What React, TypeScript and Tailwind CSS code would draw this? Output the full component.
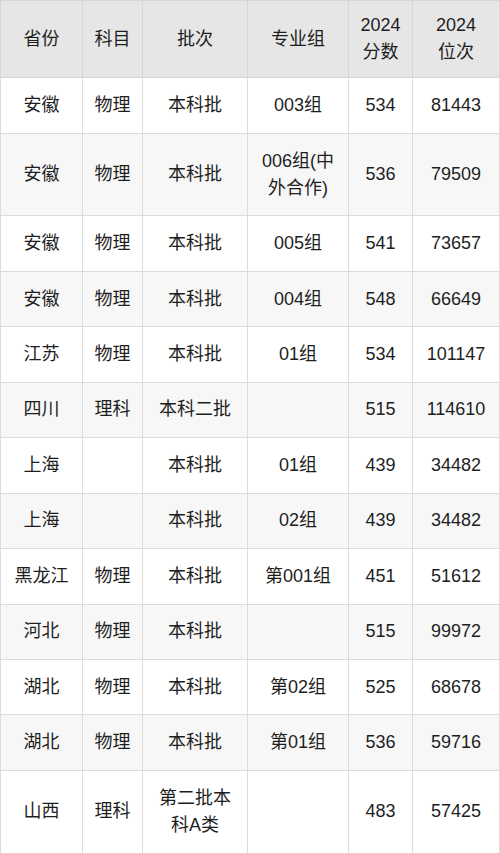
const rows: { cells: string[][]; h: string }[] = [
  { cells: [["安徽"], ["物理"], ["本科批"], ["003组"], ["534"], ["81443"]], h: "h-[56px]" },
  { cells: [["安徽"], ["物理"], ["本科批"], ["006组(中", "外合作)"], ["536"], ["79509"]], h: "h-[82px]" },
  { cells: [["安徽"], ["物理"], ["本科批"], ["005组"], ["541"], ["73657"]], h: "h-[56px]" },
  { cells: [["安徽"], ["物理"], ["本科批"], ["004组"], ["548"], ["66649"]], h: "h-[55.4px]" },
  { cells: [["江苏"], ["物理"], ["本科批"], ["01组"], ["534"], ["101147"]], h: "h-[55.4px]" },
  { cells: [["四川"], ["理科"], ["本科二批"], [""], ["515"], ["114610"]], h: "h-[55.4px]" },
  { cells: [["上海"], [""], ["本科批"], ["01组"], ["439"], ["34482"]], h: "h-[55.4px]" },
  { cells: [["上海"], [""], ["本科批"], ["02组"], ["439"], ["34482"]], h: "h-[55.4px]" },
  { cells: [["黑龙江"], ["物理"], ["本科批"], ["第001组"], ["451"], ["51612"]], h: "h-[55.6px]" },
  { cells: [["河北"], ["物理"], ["本科批"], [""], ["515"], ["99972"]], h: "h-[55.4px]" },
  { cells: [["湖北"], ["物理"], ["本科批"], ["第02组"], ["525"], ["68678"]], h: "h-[55.4px]" },
  { cells: [["湖北"], ["物理"], ["本科批"], ["第01组"], ["536"], ["59716"]], h: "h-[55.6px]" },
  { cells: [["山西"], ["理科"], ["第二批本", "科A类"], [""], ["483"], ["57425"]], h: "h-[83px]" },
];

const header: string[][] = [["省份"], ["科目"], ["批次"], ["专业组"], ["2024", "分数"], ["2024", "位次"]];

function Lines({ lines }: { lines: string[] }) {
  return (
    <>
      {lines.map((l, i) => (
        <span key={i} className="block">
          {l}
        </span>
      ))}
    </>
  );
}

export default function App() {
  return (
    <div
      className="w-[500px] bg-white text-[18px] leading-[27px] text-[#1e1e1e]"
      style={{ fontFamily: '"Liberation Sans", "Noto Sans CJK SC", sans-serif' }}
    >
      <table className="w-[499px] table-fixed border-collapse text-center">
        <colgroup>
          <col className="w-[82px]" />
          <col className="w-[60px]" />
          <col className="w-[105px]" />
          <col className="w-[101px]" />
          <col className="w-[64px]" />
          <col className="w-[87px]" />
        </colgroup>
        <thead>
          <tr className="h-[77px] bg-[#e6e6e6]">
            {header.map((h, i) => (
              <th key={i} className="border border-[#d6d6d6] px-1 font-normal">
                <Lines lines={h} />
              </th>
            ))}
          </tr>
        </thead>
        <tbody>
          {rows.map((r, ri) => (
            <tr key={ri} className={`${r.h} ${ri % 2 === 1 ? "bg-[#f7f7f7]" : "bg-white"}`}>
              {r.cells.map((c, ci) => (
                <td key={ci} className="border border-[#dcdcdc] px-1 align-middle">
                  <Lines lines={c} />
                </td>
              ))}
            </tr>
          ))}
        </tbody>
      </table>
    </div>
  );
}
